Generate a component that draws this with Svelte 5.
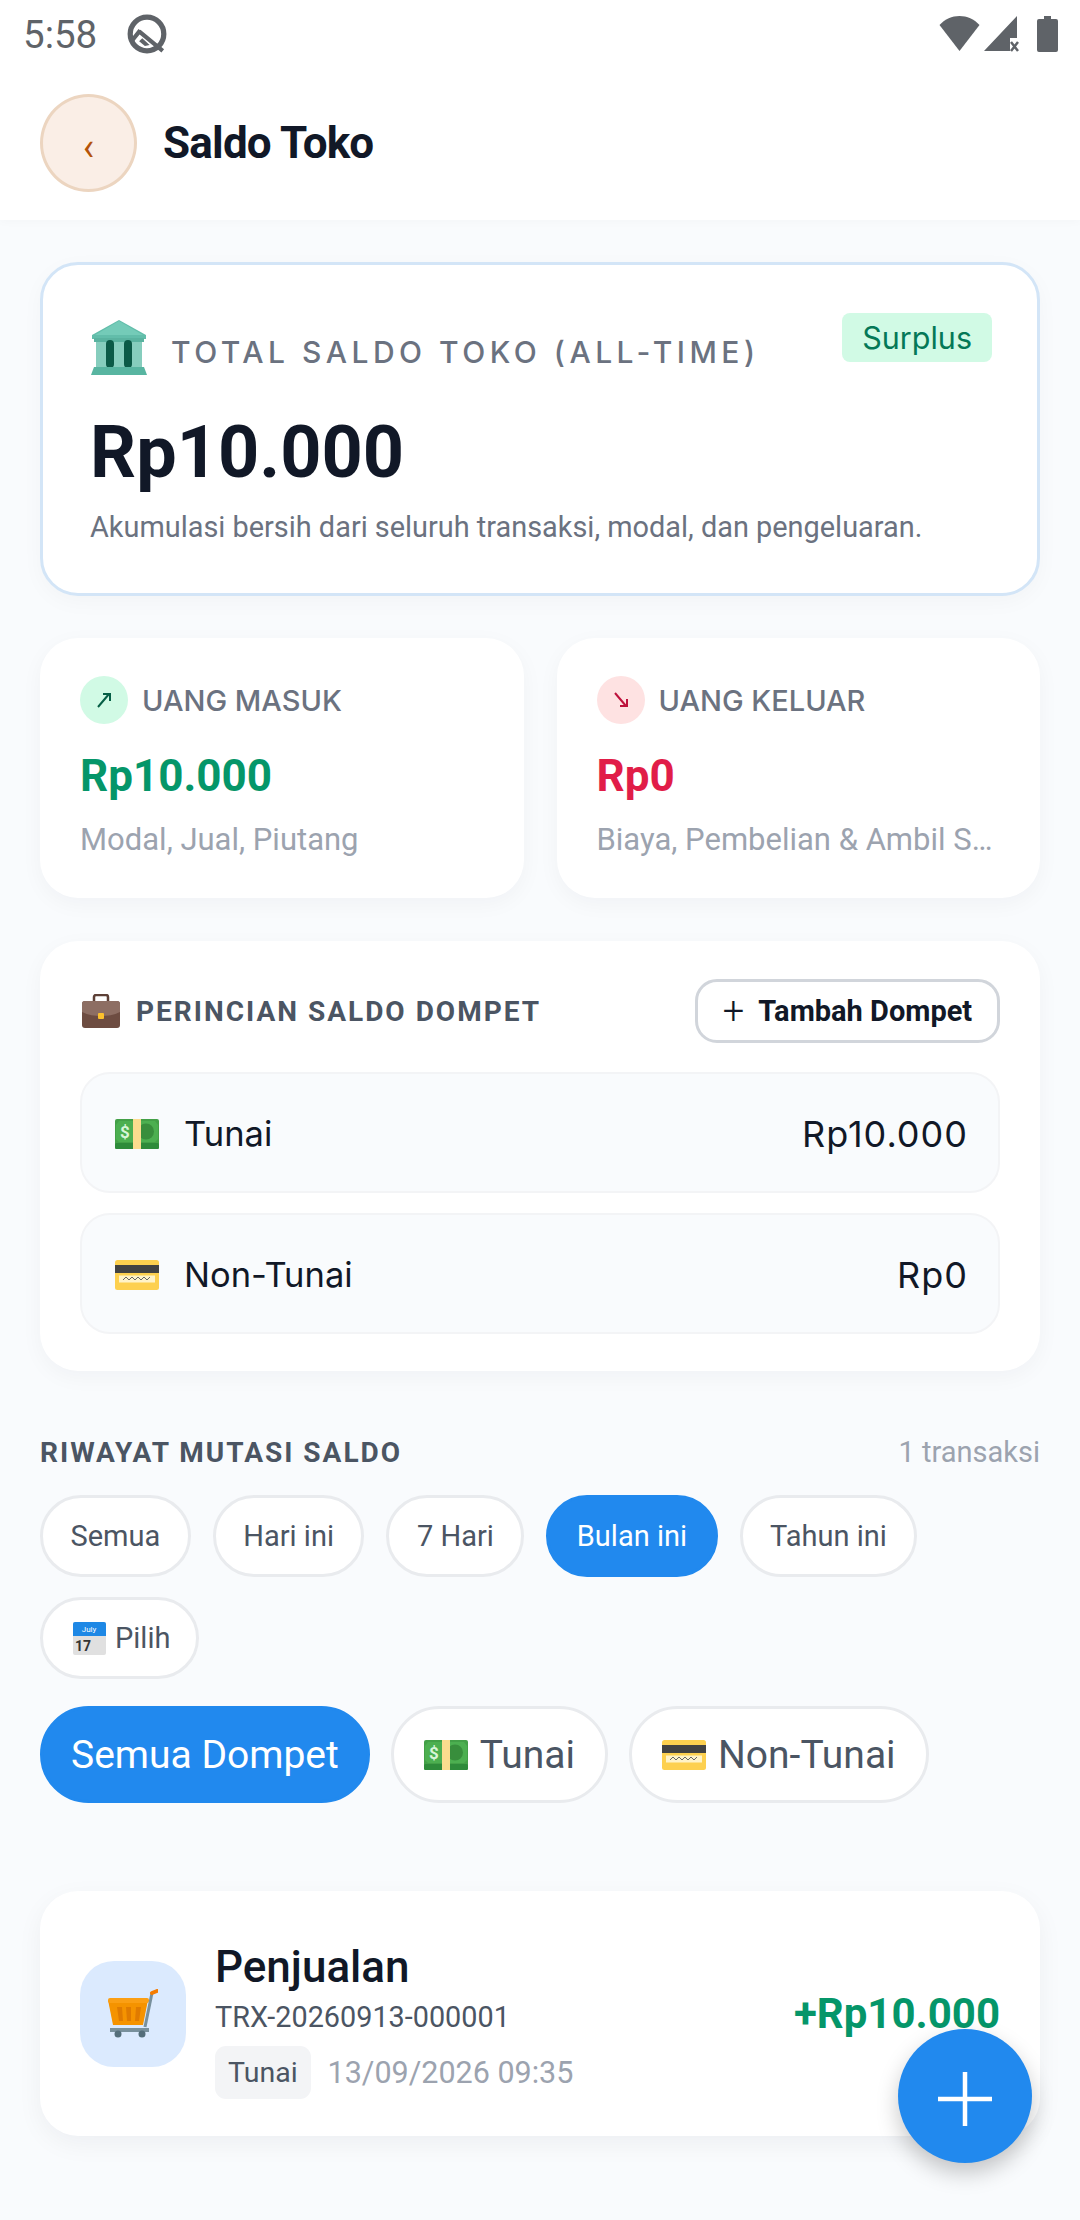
<script lang="ts">
  // Saldo Toko screen: balance summary, wallets and mutation history.
  const ranges = ['Semua', 'Hari ini', '7 Hari', 'Bulan ini', 'Tahun ini'];
  let range = $state('Bulan ini');
  let wallet = $state('Semua Dompet');
</script>

{#snippet cash(w)}
  <svg width={w} viewBox="0 0 44 30" class="emoji" aria-hidden="true">
    <rect x="0" y="0" width="44" height="30" rx="2" fill="#43a047" />
    <rect x="0" y="24" width="44" height="6" rx="1.5" fill="#2e8b3a" />
    <path d="M4 2h36l3 4v14l-3 3H4l-3-3V6z" fill="#4caf50" />
    <circle cx="31" cy="12.500" r="8" fill="#388e3c" />
    <rect x="18" y="0" width="8" height="30" fill="#fbdc8e" />
    <text x="10" y="19" font-size="17" font-family="Roboto, sans-serif" font-weight="700" fill="#d8f5d8" text-anchor="middle">$</text>
  </svg>
{/snippet}

{#snippet card(w)}
  <svg width={w} viewBox="0 0 44 30" class="emoji" aria-hidden="true">
    <rect width="44" height="30" rx="2.500" fill="#fdd04f" />
    <rect y="5" width="44" height="8" fill="#424242" />
    <rect x="4" y="15.500" width="36" height="7" fill="#fff3c8" />
    <path d="M8 20l3-3 3 3 3-3 3 3 3-3 3 3 3-3 3 3 3-3" fill="none" stroke="#666" stroke-width="1" />
  </svg>
{/snippet}

<div class="screen">
  <div class="top">
    <div class="status">
      <span class="clock">5:58</span>
      <svg class="at" width="42" height="42" viewBox="0 0 40 40" aria-hidden="true">
        <circle cx="20" cy="20" r="16" fill="none" stroke="#5f6368" stroke-width="5" />
        <path d="M12.500 17.500L35 36M13.500 16.500L6 26" fill="none" stroke="#5f6368" stroke-width="4" />
        <path d="M12.500 27l3-3 7 6.500-4.500 1z" fill="#5f6368" />
      </svg>
      <span class="spring"></span>
      <svg width="41" height="36" viewBox="0 0 41 36" aria-hidden="true">
        <path d="M0.500 9C6 3 13 0 20.500 0S35 3 40.500 9L20.500 35z" fill="#5f6368" />
      </svg>
      <svg class="signal" width="36" height="36" viewBox="0 0 36 36" aria-hidden="true">
        <path d="M33 0v22h-7v13H0z" fill="#5f6368" />
        <path d="M27 26l7 9M34 26l-7 9" stroke="#5f6368" stroke-width="2.500" fill="none" />
      </svg>
      <svg class="battery" width="21" height="36" viewBox="0 0 21 36" aria-hidden="true">
        <path d="M7 0h7v3h5a2 2 0 0 1 2 2v29a2 2 0 0 1-2 2H2a2 2 0 0 1-2-2V5a2 2 0 0 1 2-2h5z" fill="#5f6368" />
      </svg>
    </div>
    <header class="bar">
      <button class="back" aria-label="Kembali">‹</button>
      <h1>Saldo Toko</h1>
    </header>
  </div>

  <main>
    <section class="hero">
      <div class="hero-head">
        <div class="hero-label">
          <svg width="56" height="55" viewBox="0 0 56 55" aria-hidden="true">
            <path d="M28 0L55 15v4H1v-4z" fill="#62bdaa" />
            <path d="M28 1L4 15h48z" fill="#74cbb8" />
            <rect x="5" y="19" width="46" height="28" fill="#86cdbd" />
            <rect x="3" y="18" width="50" height="4" fill="#5ab3a0" />
            <rect x="15" y="20" width="8" height="28" rx="4" fill="#0b5a47" />
            <rect x="33" y="20" width="8" height="28" rx="4" fill="#0b5a47" />
            <path d="M3 47h50l3 8H0z" fill="#58b5a1" />
          </svg>
          <span>TOTAL SALDO TOKO (ALL-TIME)</span>
        </div>
        <span class="surplus">Surplus</span>
      </div>
      <div class="hero-value">Rp10.000</div>
      <p>Akumulasi bersih dari seluruh transaksi, modal, dan pengeluaran.</p>
    </section>

    <div class="stats">
      <section class="stat">
        <div class="stat-head">
          <span class="dot up">
            <svg width="18" height="18" viewBox="0 0 18 18" aria-hidden="true"><path d="M3 16L14 3M8 3h7v7" fill="none" stroke="#065f46" stroke-width="2" /></svg>
          </span>
          <span>UANG MASUK</span>
        </div>
        <div class="stat-value in">Rp10.000</div>
        <div class="stat-sub">Modal, Jual, Piutang</div>
      </section>
      <section class="stat">
        <div class="stat-head">
          <span class="dot down">
            <svg width="18" height="18" viewBox="0 0 18 18" aria-hidden="true"><path d="M3 2l11 13M15 8v7H8" fill="none" stroke="#be123c" stroke-width="2" /></svg>
          </span>
          <span>UANG KELUAR</span>
        </div>
        <div class="stat-value out">Rp0</div>
        <div class="stat-sub">Biaya, Pembelian &amp; Ambil Saldo</div>
      </section>
    </div>

    <section class="wallets">
      <div class="wallets-head">
        <div class="wallets-title">
          <svg width="38" height="34" viewBox="0 0 38 34" aria-hidden="true">
            <path d="M12 8V3a2 2 0 0 1 2-2h10a2 2 0 0 1 2 2v5" fill="none" stroke="#5d4037" stroke-width="2.500" />
            <rect y="7" width="38" height="27" rx="3" fill="#6d4c41" />
            <path d="M0 10a3 3 0 0 1 3-3h32a3 3 0 0 1 3 3v8c-6 3-13 4-19 4S6 21 0 18z" fill="#8d6e63" />
            <rect x="16" y="19" width="6" height="6" rx="1" fill="#fbc02d" />
          </svg>
          <h2>PERINCIAN SALDO DOMPET</h2>
        </div>
        <button class="add-wallet"><span class="plus">+</span>Tambah Dompet</button>
      </div>
      <div class="wallet-row">
        <span class="wallet-name">{@render cash(44)}<span>Tunai</span></span>
        <span class="wallet-amount">Rp10.000</span>
      </div>
      <div class="wallet-row">
        <span class="wallet-name">{@render card(44)}<span>Non-Tunai</span></span>
        <span class="wallet-amount">Rp0</span>
      </div>
    </section>

    <div class="history-head">
      <h2>RIWAYAT MUTASI SALDO</h2>
      <span>1 transaksi</span>
    </div>

    <div class="chips">
      {#each ranges as r}
        <button class="chip" class:active={range === r} onclick={() => (range = r)}>{r}</button>
      {/each}
      <button class="chip pick">
        <svg width="33" height="33" viewBox="0 0 33 33" aria-hidden="true">
          <rect width="33" height="33" rx="2" fill="#e0e0e0" />
          <path d="M0 2a2 2 0 0 1 2-2h29a2 2 0 0 1 2 2v12H0z" fill="#1e88e5" />
          <text x="16" y="10" font-size="8" font-family="Roboto, sans-serif" fill="#fff" text-anchor="middle">July</text>
          <text x="10" y="29" font-size="14" font-weight="700" font-family="Roboto, sans-serif" fill="#333" text-anchor="middle">17</text>
        </svg>
        Pilih
      </button>
    </div>

    <div class="wallet-chips">
      <button class="wchip" class:active={wallet === 'Semua Dompet'} onclick={() => (wallet = 'Semua Dompet')}>Semua Dompet</button>
      <button class="wchip" class:active={wallet === 'Tunai'} onclick={() => (wallet = 'Tunai')}>{@render cash(44)}Tunai</button>
      <button class="wchip" class:active={wallet === 'Non-Tunai'} onclick={() => (wallet = 'Non-Tunai')}>{@render card(44)}Non-Tunai</button>
    </div>

    <section class="trx">
      <div class="trx-icon">
        <svg width="50" height="50" viewBox="0 0 50 50" aria-hidden="true">
          <path d="M0 11h40l-5 25H5z" fill="#f59300" />
          <rect y="9" width="41" height="5" rx="2" fill="#fb9f14" />
          <path d="M9 18h5l1 14h-4zM18 18h5v14h-4zM28 18h5l-2 14h-4z" fill="#e07b00" />
          <path d="M37 38L44 4" stroke="#78909c" stroke-width="3" fill="none" />
          <path d="M44 4l5-2" stroke="#f57c00" stroke-width="4" stroke-linecap="round" />
          <path d="M2 41h39" stroke="#78909c" stroke-width="4" />
          <circle cx="10" cy="45" r="3.500" fill="#546e7a" />
          <circle cx="34" cy="45" r="3.500" fill="#546e7a" />
        </svg>
      </div>
      <div class="trx-body">
        <div class="trx-title">Penjualan</div>
        <div class="trx-id">TRX-20260913-000001</div>
        <div class="trx-meta">
          <span class="tag">Tunai</span>
          <span class="date">13/09/2026 09:35</span>
        </div>
      </div>
      <div class="trx-amount">+Rp10.000</div>
    </section>
  </main>

  <button class="fab" aria-label="Tambah">
    <svg width="54" height="54" viewBox="0 0 54 54" aria-hidden="true"><path d="M27 0v54M0 27h54" stroke="#fff" stroke-width="4.500" /></svg>
  </button>
</div>

<style>
  :global(body) {
    margin: 0;
    background: #f9fbfd;
  }
  .screen {
    position: relative;
    height: 2220px;
    overflow: hidden;
    background: #f9fbfd;
    font-family: Roboto, sans-serif;
    color: #111827;
  }
  button {
    font-family: inherit;
  }
  h1, h2, p {
    margin: 0;
  }

  .top {
    background: #fff;
    height: 220px;
    box-shadow: 0 3px 8px rgba(0, 0, 0, 0.02);
  }
  .status {
    height: 66px;
    display: flex;
    align-items: center;
    padding: 2px 22px 0 23px;
    box-sizing: border-box;
    color: #5f6368;
  }
  .clock {
    font-size: 38.500px;
    margin-right: 29px;
  }
  .spring {
    flex: 1;
  }
  .signal {
    margin-left: 4px;
  }
  .battery {
    margin-left: 17px;
  }
  .bar {
    height: 154px;
    display: flex;
    align-items: center;
    gap: 26px;
    padding: 0 40px;
  }
  .back {
    width: 97px;
    height: 98px;
    border-radius: 50%;
    border: 3px solid #ecd5c0;
    background: #faeee6;
    color: #b45309;
    font-size: 38px;
    line-height: 1;
    padding: 8px 0 0;
  }
  h1 {
    font-size: 44px;
    font-weight: 700;
    letter-spacing: -0.8px;
    color: #111827;
  }

  main {
    padding: 42px 40px 0;
  }

  .hero {
    background: #fff;
    border: 3px solid #d3e5f7;
    border-radius: 38px;
    height: 334px;
    box-sizing: border-box;
    padding: 48px 45px 0 47px;
    box-shadow: 0 6px 22px rgba(15, 23, 42, 0.03);
  }
  .hero-head {
    display: flex;
    justify-content: space-between;
    align-items: flex-start;
  }
  .hero-label {
    display: flex;
    align-items: flex-end;
    gap: 24px;
    margin: 7px 0 0 1px;
    font-family: Inter, sans-serif;
    font-size: 30px;
    font-weight: 500;
    letter-spacing: 4.500px;
    color: #6b7280;
  }
  .hero-label span {
    line-height: 46px;
  }
  .surplus {
    background: #d1fae5;
    color: #047857;
    font-family: Inter, sans-serif;
    font-size: 30.500px;
    border-radius: 8px;
    padding: 5px 20px;
    height: 49px;
    box-sizing: border-box;
    line-height: 39px;
  }
  .hero-value {
    font-size: 72px;
    font-weight: 700;
    line-height: 84px;
    margin-top: 36px;
    color: #111827;
  }
  .hero p {
    font-size: 28.900px;
    color: #6b7280;
    margin-top: 15px;
  }

  .stats {
    display: grid;
    grid-template-columns: 1fr 1fr;
    gap: 33px;
    margin-top: 42px;
  }
  .stat {
    background: #fff;
    border-radius: 38px;
    height: 260px;
    box-sizing: border-box;
    padding: 38px 38px 0 40px;
    box-shadow: 0 6px 22px rgba(15, 23, 42, 0.04);
    min-width: 0;
  }
  .stat-head {
    display: flex;
    align-items: center;
    gap: 14px;
    font-family: Inter, sans-serif;
    font-size: 29px;
    font-weight: 500;
    color: #6b7280;
  }
  .dot {
    width: 48px;
    height: 48px;
    border-radius: 50%;
    display: flex;
    align-items: center;
    justify-content: center;
  }
  .up { background: #d1fae5; }
  .down { background: #fee2e2; }
  .stat-value {
    font-size: 44px;
    font-weight: 700;
    line-height: 52px;
    margin-top: 26px;
  }
  .in { color: #059669; }
  .out { color: #e11d48; }
  .stat-sub {
    font-size: 31px;
    color: #9ca3af;
    margin-top: 19px;
    white-space: nowrap;
    overflow: hidden;
    text-overflow: ellipsis;
  }

  .wallets {
    background: #fff;
    border-radius: 38px;
    height: 430px;
    box-sizing: border-box;
    margin-top: 43px;
    padding: 38px 40px 0;
    box-shadow: 0 6px 22px rgba(15, 23, 42, 0.04);
  }
  .wallets-head {
    display: flex;
    justify-content: space-between;
    align-items: center;
    margin-bottom: 29px;
  }
  .wallets-title {
    display: flex;
    align-items: center;
    gap: 16px;
    margin-left: 2px;
  }
  h2 {
    font-size: 28px;
    font-weight: 700;
    letter-spacing: 2px;
    color: #4b5563;
  }
  .add-wallet {
    height: 64px;
    width: 305px;
    border: 3px solid #d1d5db;
    border-radius: 22px;
    background: #fff;
    font-size: 29px;
    font-weight: 700;
    color: #111827;
    display: flex;
    align-items: center;
    justify-content: center;
    padding: 0;
  }
  .plus {
    font-weight: 300;
    font-size: 38px;
    line-height: 1;
    margin-right: 14px;
  }
  .wallet-row {
    height: 121px;
    box-sizing: border-box;
    background: #f9fbfd;
    border: 2px solid #f3f4f6;
    border-radius: 30px;
    display: flex;
    align-items: center;
    justify-content: space-between;
    padding: 2px 30px 0 33px;
    margin-bottom: 20px;
    font-family: Inter, sans-serif;
    font-size: 34.500px;
    color: #111827;
  }
  .wallet-name {
    display: flex;
    align-items: center;
    gap: 25px;
  }
  .wallet-amount {
    font-size: 36px;
    letter-spacing: 1px;
  }

  .history-head {
    display: flex;
    justify-content: space-between;
    align-items: center;
    margin-top: 64px;
  }
  .history-head span {
    font-size: 29px;
    color: #9ca3af;
  }
  .chips {
    display: flex;
    flex-wrap: wrap;
    gap: 20px 22px;
    margin-top: 26px;
  }
  .chip {
    height: 82px;
    padding: 0 27.500px;
    border: 3px solid #e9ebee;
    border-radius: 41px;
    background: #fff;
    font-size: 29px;
    color: #4b5563;
  }
  .chip.active, .wchip.active {
    background: #2189ee;
    border-color: #2189ee;
    color: #fff;
  }
  .pick {
    display: flex;
    align-items: center;
    gap: 9px;
    padding: 0 26px 0 30px;
  }
  .wallet-chips {
    display: flex;
    gap: 21px;
    margin-top: 27px;
  }
  .wchip {
    height: 97px;
    padding: 0 30px;
    border: 3px solid #e9ebee;
    border-radius: 49px;
    background: #fff;
    font-size: 39px;
    color: #4b5563;
    display: flex;
    align-items: center;
    gap: 12px;
  }
  .wchip:first-child {
    padding: 0 28px;
  }

  .trx {
    background: #fff;
    border-radius: 38px;
    height: 245px;
    box-sizing: border-box;
    margin-top: 88px;
    padding: 0 40px;
    display: flex;
    align-items: center;
    box-shadow: 0 8px 26px rgba(15, 23, 42, 0.05);
  }
  .trx-icon {
    width: 106px;
    height: 106px;
    border-radius: 34px;
    background: #dbeafe;
    display: flex;
    align-items: center;
    justify-content: center;
    flex-shrink: 0;
  }
  .trx-body {
    flex: 1;
    margin-left: 29px;
    padding-top: 14px;
  }
  .trx-title {
    font-size: 44px;
    font-weight: 500;
    line-height: 50px;
  }
  .trx-id {
    font-size: 28.800px;
    color: #4b5563;
    margin-top: 8px;
  }
  .trx-meta {
    display: flex;
    align-items: center;
    gap: 17px;
    margin-top: 12px;
  }
  .tag {
    background: #f3f4f6;
    color: #4b5563;
    font-size: 28.500px;
    border-radius: 11px;
    padding: 10px 13px;
  }
  .date {
    font-size: 30.500px;
    color: #9ca3af;
  }
  .trx-amount {
    font-size: 42px;
    font-weight: 700;
    color: #059669;
  }

  .fab {
    position: absolute;
    left: 898px;
    top: 2029px;
    width: 134px;
    height: 134px;
    border: none;
    border-radius: 50%;
    background: #2189ee;
    padding: 5px 0 0;
    display: flex;
    align-items: center;
    justify-content: center;
    box-shadow: 0 10px 22px rgba(0, 0, 0, 0.22);
  }
  .emoji {
    display: block;
    flex-shrink: 0;
  }
</style>
